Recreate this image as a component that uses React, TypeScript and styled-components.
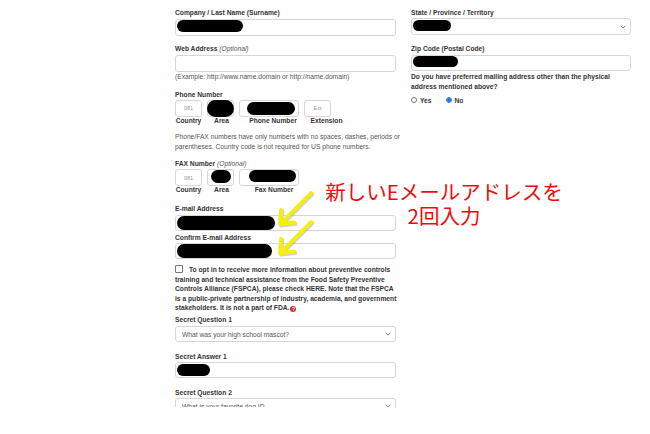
import React from "react";
import styled, { createGlobalStyle } from "styled-components";

const GlobalStyle = createGlobalStyle`
  html, body {
    margin: 0;
    padding: 0;
    background: #ffffff;
  }
  body {
    font-family: "Liberation Sans", Arial, sans-serif;
  }
`;

const Page = styled.div`
  position: relative;
  width: 650px;
  height: 434px;
  background: #ffffff;
  overflow: hidden;
`;

const FormArea = styled.div`
  display: flex;
  align-items: flex-start;
  gap: 15px;
  height: 407px;
  padding: 8px 0 0 175px;
  box-sizing: border-box;
  overflow: hidden;
`;

const Column = styled.div<{ $w: number }>`
  display: flex;
  flex-direction: column;
  width: ${(p) => p.$w}px;
  flex-shrink: 0;

  & > * {
    flex-shrink: 0;
  }
`;

const Label = styled.div<{ $mt?: number }>`
  margin-top: ${(p) => p.$mt ?? 0}px;
  font-size: 6.7px;
  line-height: 9px;
  font-weight: bold;
  color: #333333;
  white-space: nowrap;
`;

const Optional = styled.span`
  font-weight: normal;
  font-style: italic;
  color: #555555;
`;

const TextBox = styled.div<{ $mt?: number; $h?: number }>`
  margin-top: ${(p) => p.$mt ?? 0}px;
  height: ${(p) => p.$h ?? 17}px;
  border: 1px solid #d6d6d6;
  border-radius: 3px;
  box-sizing: border-box;
  display: flex;
  align-items: center;
  padding: 0 1px;
  background: #ffffff;
`;

const SelectBox = styled(TextBox)<{ $pl?: number }>`
  justify-content: space-between;
  padding: 0 4px 0 ${(p) => p.$pl ?? 6}px;
  font-size: 6.7px;
  color: #555555;
  white-space: nowrap;
`;

const Redact = styled.span<{ $w: number; $h: number; $dy?: number }>`
  display: block;
  width: ${(p) => p.$w}px;
  height: ${(p) => p.$h}px;
  margin-top: ${(p) => p.$dy ?? 0}px;
  background: #000000;
  border-radius: 999px;
  flex-shrink: 0;
`;

const Help = styled.div<{ $mt?: number; $lh?: number }>`
  margin-top: ${(p) => p.$mt ?? 0}px;
  font-size: 6.7px;
  line-height: ${(p) => p.$lh ?? 9}px;
  color: #555555;
  white-space: nowrap;
`;

const PhoneRow = styled.div<{ $mt?: number }>`
  display: flex;
  gap: 5px;
  margin-top: ${(p) => p.$mt ?? 0}px;
`;

const PhoneCell = styled.div<{ $w: number }>`
  display: flex;
  flex-direction: column;
  align-items: center;
  width: ${(p) => p.$w}px;
`;

const MiniBox = styled.div<{ $pad?: number }>`
  width: 100%;
  height: 17px;
  border: 1px solid #d6d6d6;
  border-radius: 3px;
  box-sizing: border-box;
  display: flex;
  align-items: center;
  justify-content: center;
  font-size: 5.5px;
  color: #999999;
  padding-left: ${(p) => p.$pad ?? 0}px;
`;

const SubLabel = styled.div<{ $shift?: number }>`
  font-size: 6.7px;
  line-height: 8px;
  font-weight: bold;
  color: #333333;
  white-space: nowrap;
  flex-shrink: 0;
  padding-left: ${(p) => p.$shift ?? 0}px;
`;

const OptIn = styled.div<{ $mt?: number }>`
  margin-top: ${(p) => p.$mt ?? 0}px;
  font-size: 6.7px;
  line-height: 9.5px;
  font-weight: bold;
  color: #333333;
  white-space: nowrap;
`;

const CheckBox = styled.span`
  display: inline-block;
  width: 6px;
  height: 6px;
  border: 1px solid #767676;
  border-radius: 1px;
  margin-right: 6px;
  vertical-align: -1px;
  background: #ffffff;
`;

const HelpDot = styled.span`
  display: inline-flex;
  align-items: center;
  justify-content: center;
  width: 6px;
  height: 6px;
  margin-left: 1px;
  border-radius: 50%;
  background: #d9262b;
  color: #ffffff;
  font-size: 5px;
  line-height: 6px;
  vertical-align: -1px;
`;

const Question = styled.div<{ $mt?: number }>`
  margin-top: ${(p) => p.$mt ?? 0}px;
  font-size: 6.7px;
  line-height: 10px;
  font-weight: bold;
  color: #333333;
  white-space: nowrap;
`;

const RadioRow = styled.div<{ $mt?: number }>`
  display: flex;
  align-items: center;
  height: 10px;
  margin-top: ${(p) => p.$mt ?? 0}px;
  gap: 3px;
  font-size: 6.7px;
  font-weight: bold;
  color: #333333;
`;

const Radio = styled.span<{ $on?: boolean }>`
  display: inline-block;
  width: 6px;
  height: 6px;
  border-radius: 50%;
  box-sizing: border-box;
  border: 1px solid ${(p) => (p.$on ? "#2b7de9" : "#767676")};
  background: ${(p) =>
    p.$on ? "radial-gradient(circle, #1a6fe0 0 55%, #9cc3f5 60%)" : "#ffffff"};
`;

const RadioText = styled.span`
  margin-right: 11px;
`;

const Annotation = styled.div`
  position: absolute;
  left: 304px;
  top: 179px;
  width: 280px;
  text-align: center;
  font-family: "Noto Sans CJK JP", "Noto Sans", sans-serif;
  font-size: 20.5px;
  line-height: 24px;
  color: #f00a0a;
`;

const Overlay = styled.svg`
  position: absolute;
  left: 0;
  top: 0;
  pointer-events: none;
`;

const Chevron = () => (
  <svg width="6" height="4" viewBox="0 0 6 4">
    <path d="M0.6 0.8 L3 3.1 L5.4 0.8" fill="none" stroke="#555" strokeWidth="0.8" />
  </svg>
);

const Arrow: React.FC<{ x: number; y: number }> = ({ x, y }) => {
  const tip = { x: x - 31, y: y + 31 };
  const d = `M${x} ${y} L${tip.x} ${tip.y} M${tip.x + 14} ${tip.y - 1.5} L${tip.x} ${tip.y} L${tip.x + 1} ${tip.y - 14}`;
  return (
    <g fill="none" strokeLinecap="round" strokeLinejoin="round">
      <path d={d} stroke="#9a9a9a" strokeOpacity="0.45" strokeWidth="4.5" transform="translate(1 1.2)" />
      <path d={d} stroke="#f7f000" strokeWidth="3.8" />
    </g>
  );
};

const App: React.FC = () => {
  return (
    <Page>
      <GlobalStyle />
      <FormArea>
        <Column $w={221}>
          <Label>Company / Last Name (Surname)</Label>
          <TextBox $mt={2}>
            <Redact $w={66} $h={12} $dy={-3} />
          </TextBox>

          <Label $mt={7.5}>
            Web Address <Optional>(Optional)</Optional>
          </Label>
          <TextBox $mt={2} />
          <Help>(Example: http://www.name.domain or http://name.domain)</Help>

          <Label $mt={9}>Phone Number</Label>
          <PhoneRow $mt={1}>
            <PhoneCell $w={27}>
              <MiniBox>081</MiniBox>
              <SubLabel>Country</SubLabel>
            </PhoneCell>
            <PhoneCell $w={27}>
              <MiniBox>
                <Redact $w={27} $h={17} />
              </MiniBox>
              <SubLabel $shift={2}>Area</SubLabel>
            </PhoneCell>
            <PhoneCell $w={60}>
              <MiniBox $pad={4}>
                <Redact $w={48} $h={13} />
              </MiniBox>
              <SubLabel $shift={8}>Phone Number</SubLabel>
            </PhoneCell>
            <PhoneCell $w={27}>
              <MiniBox>Ext</MiniBox>
              <SubLabel $shift={18}>Extension</SubLabel>
            </PhoneCell>
          </PhoneRow>

          <Help $mt={7} $lh={10}>
            Phone/FAX numbers have only numbers with no spaces, dashes, periods or
            <br />
            parentheses. Country code is not required for US phone numbers.
          </Help>

          <Label $mt={7.5}>
            FAX Number <Optional>(Optional)</Optional>
          </Label>
          <PhoneRow $mt={1}>
            <PhoneCell $w={27}>
              <MiniBox>081</MiniBox>
              <SubLabel>Country</SubLabel>
            </PhoneCell>
            <PhoneCell $w={27}>
              <MiniBox>
                <Redact $w={20} $h={13} $dy={-3} />
              </MiniBox>
              <SubLabel $shift={2}>Area</SubLabel>
            </PhoneCell>
            <PhoneCell $w={60}>
              <MiniBox $pad={6}>
                <Redact $w={47} $h={12} $dy={-4} />
              </MiniBox>
              <SubLabel $shift={10}>Fax Number</SubLabel>
            </PhoneCell>
          </PhoneRow>

          <Label $mt={10}>E-mail Address</Label>
          <TextBox $mt={2} $h={16}>
            <Redact $w={98} $h={14} />
          </TextBox>

          <Label $mt={2}>Confirm E-mail Address</Label>
          <TextBox $mt={1} $h={16}>
            <Redact $w={95} $h={14} />
          </TextBox>

          <OptIn $mt={6}>
            <CheckBox />
            To opt in to receive more information about preventive controls
            <br />
            training and technical assistance from the Food Safety Preventive
            <br />
            Controls Alliance (FSPCA), please check HERE. Note that the FSPCA
            <br />
            is a public-private partnership of industry, academia, and government
            <br />
            stakeholders. It is not a part of FDA.
            <HelpDot>?</HelpDot>
          </OptIn>

          <Label $mt={2.5}>Secret Question 1</Label>
          <SelectBox $mt={2} $h={16}>
            <span>What was your high school mascot?</span>
            <Chevron />
          </SelectBox>

          <Label $mt={9.5}>Secret Answer 1</Label>
          <TextBox $mt={1.5} $h={16}>
            <Redact $w={33} $h={12} />
          </TextBox>

          <Label $mt={9.5}>Secret Question 2</Label>
          <SelectBox $mt={1.5} $h={16}>
            <span>What is your favorite dog ID</span>
            <Chevron />
          </SelectBox>
        </Column>

        <Column $w={220}>
          <Label>State / Province / Territory</Label>
          <SelectBox $mt={1} $h={17} $pl={1}>
            <Redact $w={38} $h={11} $dy={-3} />
            <Chevron />
          </SelectBox>

          <Label $mt={9}>Zip Code (Postal Code)</Label>
          <TextBox $mt={2} $h={16}>
            <Redact $w={45} $h={11} $dy={-3} />
          </TextBox>

          <Question $mt={1}>
            Do you have preferred mailing address other than the physical
            <br />
            address mentioned above?
          </Question>

          <RadioRow $mt={3}>
            <Radio />
            <RadioText>Yes</RadioText>
            <Radio $on />
            <RadioText>No</RadioText>
          </RadioRow>
        </Column>
      </FormArea>

      <Annotation>
        新しいEメールアドレスを
        <br />
        2回入力
      </Annotation>

      <Overlay width="650" height="434" viewBox="0 0 650 434">
        <Arrow x={311} y={193} />
        <Arrow x={311} y={222} />
      </Overlay>
    </Page>
  );
};

export default App;
